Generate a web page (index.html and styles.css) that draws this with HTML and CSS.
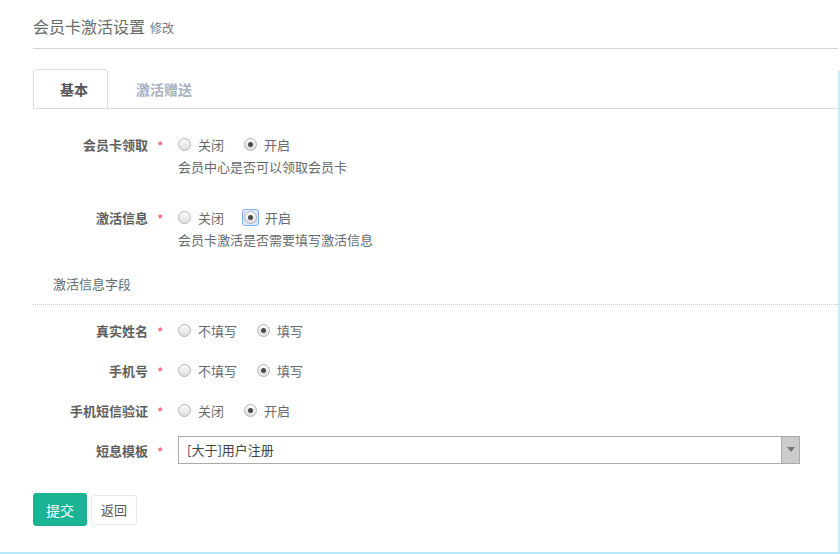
FILE: index.html
```html
<!DOCTYPE html>
<html lang="zh-CN">
<head>
<meta charset="utf-8">
<title>会员卡激活设置</title>
<link rel="stylesheet" href="styles.css">
</head>
<body>
<div class="frame">
  <main class="page">
    <header class="head">
      <h1 class="title">会员卡激活设置<small>修改</small></h1>
    </header>

    <nav class="tabs">
      <span class="tab active">基本</span>
      <span class="tab">激活赠送</span>
    </nav>

    <form class="form">
      <div class="group">
        <div class="row">
          <label class="lbl">会员卡领取</label>
          <span class="req">*</span>
          <div class="ctl">
            <span class="opt"><i class="radio"></i>关闭</span>
            <span class="opt"><i class="radio on"></i>开启</span>
          </div>
        </div>
        <div class="help">会员中心是否可以领取会员卡</div>
      </div>

      <div class="group">
        <div class="row">
          <label class="lbl">激活信息</label>
          <span class="req">*</span>
          <div class="ctl">
            <span class="opt"><i class="radio"></i>关闭</span>
            <span class="opt"><span class="focus"><i class="radio on"></i></span>开启</span>
          </div>
        </div>
        <div class="help">会员卡激活是否需要填写激活信息</div>
      </div>

      <div class="section">激活信息字段</div>

      <div class="fields">
        <div class="row tall">
          <label class="lbl">真实姓名</label>
          <span class="req">*</span>
          <div class="ctl">
            <span class="opt"><i class="radio"></i>不填写</span>
            <span class="opt"><i class="radio on"></i>填写</span>
          </div>
        </div>
        <div class="row tall">
          <label class="lbl">手机号</label>
          <span class="req">*</span>
          <div class="ctl">
            <span class="opt"><i class="radio"></i>不填写</span>
            <span class="opt"><i class="radio on"></i>填写</span>
          </div>
        </div>
        <div class="row tall">
          <label class="lbl">手机短信验证</label>
          <span class="req">*</span>
          <div class="ctl">
            <span class="opt"><i class="radio"></i>关闭</span>
            <span class="opt"><i class="radio on"></i>开启</span>
          </div>
        </div>
        <div class="row tall">
          <label class="lbl">短息模板</label>
          <span class="req">*</span>
          <div class="select">
            <span class="sel-text">[大于]用户注册</span>
            <span class="sel-arrow"><svg width="8" height="5" viewBox="0 0 8 5"><path d="M0 0h8L4 5z" fill="#777"/></svg></span>
          </div>
        </div>
      </div>

      <div class="actions">
        <button type="button" class="btn primary">提交</button>
        <button type="button" class="btn white">返回</button>
      </div>
    </form>
  </main>
  <div class="edge"></div>
</div>
</body>
</html>
```

FILE: styles.css
```css
* { box-sizing: border-box; }
html, body { margin: 0; padding: 0; background: #fff; }
body {
  font-family: "Noto Sans CJK SC", "Liberation Sans", sans-serif;
  font-size: 13px;
  color: #676a6c;
  width: 840px;
  height: 554px;
  overflow: hidden;
}
.frame {
  display: flex;
  height: 554px;
  border-bottom: 2px solid #b8e8f7;
}
.page {
  flex: 1;
  padding-left: 33px;
}
.edge {
  width: 2px;
  margin-top: 71px;
  background: #c6edf9;
}
.head {
  height: 49px;
  padding-top: 16px;
  border-bottom: 1px solid #d4d4d4;
}
.title {
  margin: 0;
  display: flex;
  align-items: baseline;
  gap: 5px;
  font-size: 16px;
  font-weight: normal;
  line-height: 20px;
  color: #676a6c;
}
.title small {
  font-size: 12px;
  line-height: 20px;
  color: #777;
}
.tabs {
  display: flex;
  margin-top: 20px;
  border-bottom: 1px solid #ddd;
  height: 40px;
}
.tab {
  height: 39px;
  line-height: 38px;
  font-size: 14px;
  font-weight: bold;
  color: #a7b1c2;
  border: 1px solid transparent;
  border-bottom: 0;
  padding: 0 27px 0 27px;
}
.tab.active {
  color: #555;
  border-color: #ddd;
  border-radius: 4px 4px 0 0;
  padding: 0 19px 0 26px;
}
.form {
  padding-top: 25px;
}
.group { margin-bottom: 30px; }
.group + .group { margin-bottom: 24px; }
.row {
  display: flex;
  align-items: center;
  height: 20px;
}
.row.tall {
  height: 28px;
  margin-bottom: 12px;
}
.lbl {
  width: 115px;
  text-align: right;
  font-weight: bold;
  color: #5e5e5e;
}
.req {
  width: 30px;
  padding-left: 9px;
  padding-top: 3px;
  color: #ed5565;
  font-size: 14px;
}
.ctl {
  display: flex;
  align-items: center;
  gap: 20px;
}
.opt {
  display: flex;
  align-items: center;
  gap: 7px;
}
.radio {
  display: block;
  width: 13px;
  height: 13px;
  border-radius: 50%;
  border: 1px solid #b4b4b4;
  background: linear-gradient(#fbfbfb, #dedede);
  position: relative;
}
.radio.on::after {
  content: "";
  position: absolute;
  left: 3px;
  top: 3px;
  width: 5px;
  height: 5px;
  border-radius: 50%;
  background: #4a4a4a;
}
.focus {
  display: block;
  padding: 1px;
  margin: -2px -1px -2px -2px;
  border: 1px solid #7fb0f0;
  border-radius: 3px;
  background: #dbe8fb;
}
.help {
  margin-top: 3px;
  padding-left: 145px;
  line-height: 20px;
}
.section {
  padding-left: 20px;
  line-height: 20px;
  padding-bottom: 10px;
  border-bottom: 1px dotted #c8c8c8;
}
.fields {
  margin-top: 11px;
}
.select {
  display: flex;
  width: 622px;
  height: 28px;
  border: 1px solid #aaa;
  margin-top: -1px;
}
.sel-text {
  flex: 1;
  padding-left: 8px;
  line-height: 26px;
  color: #444;
}
.sel-arrow {
  width: 18px;
  background: #cccccc;
  border-left: 1px solid #aaa;
  display: flex;
  align-items: center;
  justify-content: center;
}
.actions {
  display: flex;
  align-items: center;
  gap: 4px;
  margin-top: 29px;
}
.btn {
  font-family: inherit;
  cursor: pointer;
  border-radius: 3px;
}
.btn.primary {
  width: 54px;
  height: 33px;
  font-size: 14px;
  color: #fff;
  background: #1ab394;
  border: 1px solid #1ab394;
}
.btn.white {
  width: 46px;
  height: 30px;
  font-size: 13px;
  color: #555;
  background: #fff;
  border: 1px solid #e7eaec;
}
```
